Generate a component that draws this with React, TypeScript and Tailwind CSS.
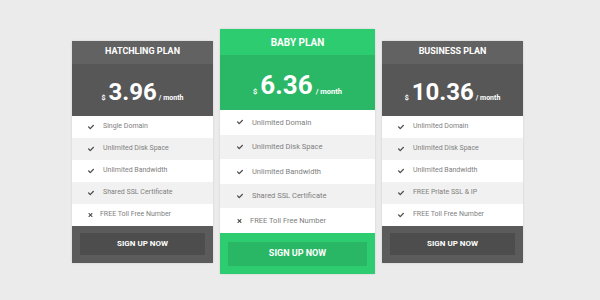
import React from 'react'

interface PlanProps {
  name: string;
  price: string;
  features: { text: string; ok: boolean }[];
  featured?: boolean;
}

const Check = () => (
  <svg viewBox="0 0 512 512" className="w-[6px] h-[6px] shrink-0" fill="#4a4a4a">
    <path d="M173.9 439.4l-166.4-166.4c-10-10-10-26.2 0-36.2l36.2-36.2c10-10 26.2-10 36.2 0L192 312.7 432.1 72.6c10-10 26.2-10 36.2 0l36.2 36.2c10 10 10 26.2 0 36.2L210.1 439.4c-10 10-26.2 10-36.2 0z" />
  </svg>
)

const Times = () => (
  <svg viewBox="0 0 352 512" className="w-[5px] h-[6px] shrink-0" fill="#4a4a4a">
    <path d="M242.7 256l100.1-100.1c12.3-12.3 12.3-32.2 0-44.5l-22.2-22.2c-12.3-12.3-32.2-12.3-44.5 0L176 189.3 75.9 89.2c-12.3-12.3-32.2-12.3-44.5 0L9.2 111.5c-12.3 12.3-12.3 32.2 0 44.5L109.3 256 9.2 356.1c-12.3 12.3-12.3 32.2 0 44.5l22.2 22.2c12.3 12.3 32.2 12.3 44.5 0L176 322.7l100.1 100.1c12.3 12.3 32.2 12.3 44.5 0l22.2-22.2c12.3-12.3 12.3-32.2 0-44.5L242.7 256z" />
  </svg>
)

const Plan = ({ name, price, features, featured }: PlanProps) => {
  if (featured) {
    return (
      <div className="w-[155px] shadow-[0_0_2px_rgba(0,0,0,0.12)]">
        <div className="h-[26px] bg-[#2ecc71] flex items-center justify-center text-white font-bold text-[10px] uppercase">{name}</div>
        <div className="h-[55px] bg-[#2ab866] flex items-baseline justify-center pt-[16px] text-white font-bold">
          <span className="text-[7.5px] mr-[3px]">$</span>
          <span className="text-[26px] leading-[28px]">{price}</span>
          <span className="text-[7.5px] ml-[3px]">/ month</span>
        </div>
        {features.map((f, i) => (
          <div key={i} className={`h-[24.6px] flex items-center pl-[17px] text-[7.5px] text-[#808080] ${i % 2 ? 'bg-[#f1f1f1]' : 'bg-white'} ${f.ok ? 'gap-[9px]' : 'gap-[8px]'}`}>
            {f.ok ? <Check /> : <Times />}
            <span>{f.text}</span>
          </div>
        ))}
        <div className="bg-[#2ecc71] px-2 pt-[9px] pb-[8px]">
          <div className="h-[24px] bg-[#29b765] flex items-center justify-center text-white font-bold text-[9px] uppercase">Sign up now</div>
        </div>
      </div>
    )
  }
  return (
    <div className="w-[141px] shadow-[0_0_2px_rgba(0,0,0,0.12)]">
      <div className="h-[23px] bg-[#626262] flex items-center justify-center text-white font-bold text-[9px] uppercase">{name}</div>
      <div className="h-[52px] bg-[#575757] flex items-baseline justify-center pt-[15px] text-white font-bold">
        <span className="text-[7px] mr-[3px]">$</span>
        <span className="text-[24px] leading-[26px]">{price}</span>
        <span className="text-[7px] ml-[2px]">/ month</span>
      </div>
      {features.map((f, i) => (
        <div key={i} className={`h-[22px] flex items-center pl-[16px] text-[7px] text-[#808080] ${i % 2 ? 'bg-[#f1f1f1]' : 'bg-white'} ${f.ok ? 'gap-[9px]' : 'gap-[7px]'}`}>
          {f.ok ? <Check /> : <Times />}
          <span>{f.text}</span>
        </div>
      ))}
      <div className="bg-[#5b5b5b] px-2 pt-[7px] pb-[8px]">
        <div className="h-[22px] bg-[#4d4d4d] flex items-center justify-center text-white font-bold text-[8px] uppercase">Sign up now</div>
      </div>
    </div>
  )
}

const App = () => {
  return (
    <div className="w-[600px] h-[300px] bg-[#ebebeb] flex items-center justify-center gap-[7px] pr-[5px] pt-[3px] font-['Roboto',sans-serif]">
      <Plan
        name="Hatchling Plan"
        price="3.96"
        features={[
          { text: 'Single Domain', ok: true },
          { text: 'Unlimited Disk Space', ok: true },
          { text: 'Unlimited Bandwidth', ok: true },
          { text: 'Shared SSL Certificate', ok: true },
          { text: 'FREE Toll Free Number', ok: false },
        ]}
      />
      <Plan
        featured
        name="Baby Plan"
        price="6.36"
        features={[
          { text: 'Unlimited Domain', ok: true },
          { text: 'Unlimited Disk Space', ok: true },
          { text: 'Unlimited Bandwidth', ok: true },
          { text: 'Shared SSL Certificate', ok: true },
          { text: 'FREE Toll Free Number', ok: false },
        ]}
      />
      <Plan
        name="Business Plan"
        price="10.36"
        features={[
          { text: 'Unlimited Domain', ok: true },
          { text: 'Unlimited Disk Space', ok: true },
          { text: 'Unlimited Bandwidth', ok: true },
          { text: 'FREE Priate SSL & IP', ok: true },
          { text: 'FREE Toll Free Number', ok: true },
        ]}
      />
    </div>
  )
}

export default App
